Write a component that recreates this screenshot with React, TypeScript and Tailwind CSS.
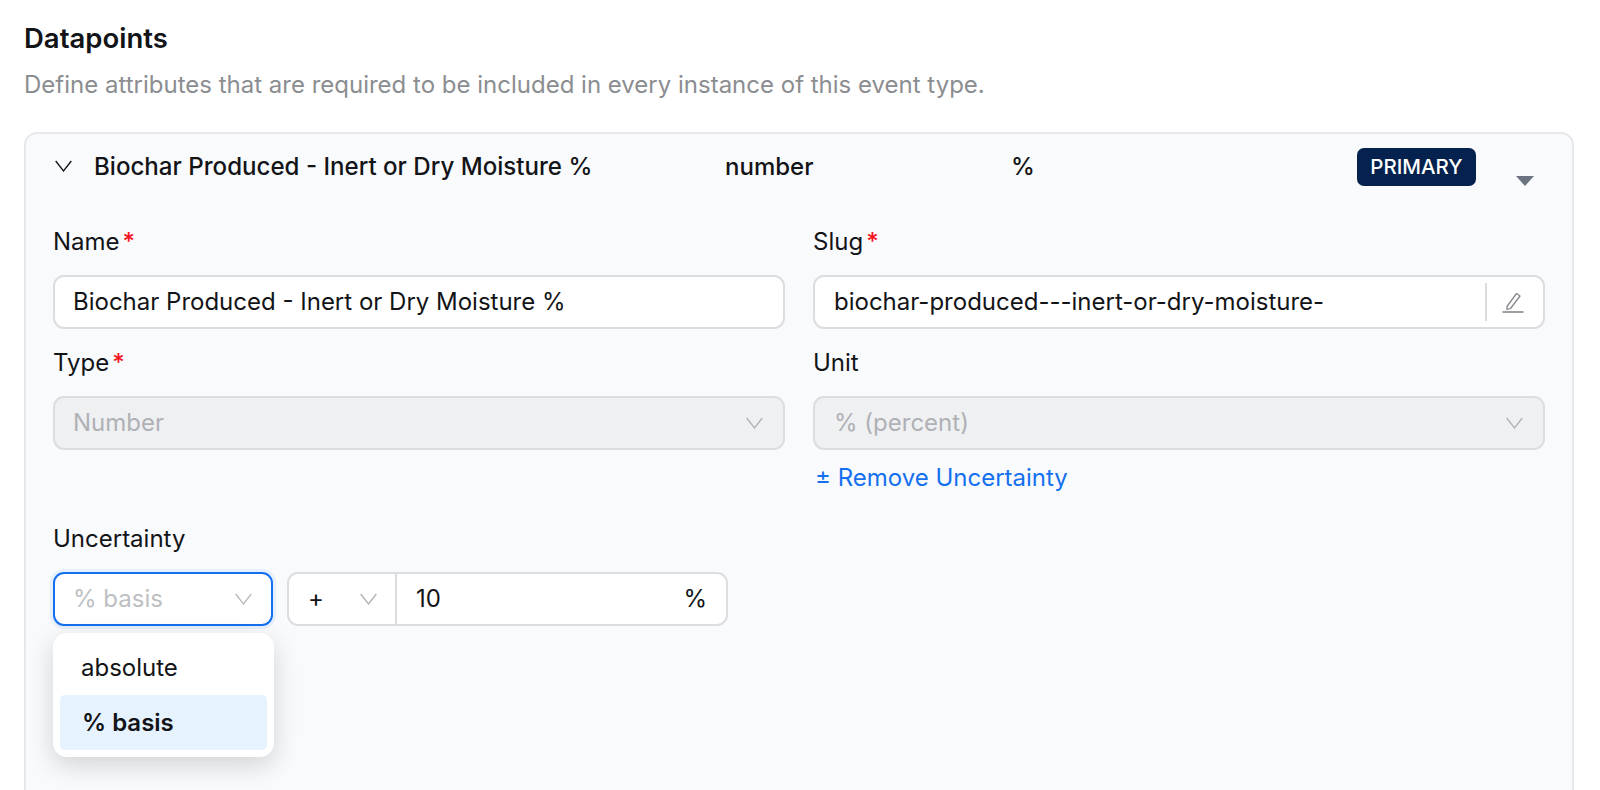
import type { ReactNode } from "react";

function Chevron({ className }: { className: string }) {
  return (
    <svg width="17" height="12" viewBox="0 0 17 12" fill="none" className={className}>
      <path d="M0.7 1l7.8 10L16.3 1" stroke="currentColor" strokeWidth="1.3" />
    </svg>
  );
}

function Label({ text, required }: { text: string; required?: boolean }) {
  return (
    <div className="mb-[17px] flex h-8 items-center text-[24px] text-[#131417]">
      {text}
      {required && <span className="ml-[3px] font-medium text-[#f5141e]">*</span>}
    </div>
  );
}

function Field({ label, required, children }: { label: string; required?: boolean; children: ReactNode }) {
  return (
    <div>
      <Label text={label} required={required} />
      {children}
    </div>
  );
}

function DisabledSelect({ value, inset }: { value: string; inset: string }) {
  return (
    <div className={`flex h-[54px] items-center justify-between rounded-[11px] border-2 border-[#dcdde0] bg-[#eff0f2] pr-[20px] text-[24px] text-[#afb1b5] ${inset}`}>
      {value}
      <Chevron className="text-[#b0b2b6]" />
    </div>
  );
}

export default function App() {
  return (
    <div className="h-[790px] overflow-hidden bg-white pl-6 pr-[26px] font-[Inter,sans-serif] text-[#131417]">
      <h2 className="flex h-[58px] items-end pb-[4px] text-[27.5px] leading-8 font-semibold">Datapoints</h2>
      <p className="flex h-[44px] items-center pt-[10px] text-[24px] text-[#8b8d91]">
        Define attributes that are required to be included in every instance of this event type.
      </p>
      <div className="mt-[30px] h-[700px] rounded-t-[13px] border-2 border-[#e7e8eb] bg-[#f9fafc] px-[27px] pt-[14px]">
        <div className="flex items-start">
          <div className="flex h-[36px] w-[41px] items-center">
            <Chevron className="ml-[2px] text-[#131417]" />
          </div>
          <div className="flex h-[38px] w-[631px] items-center text-[24.1px] font-medium">
            Biochar Produced - Inert or Dry Moisture %
          </div>
          <div className="flex h-[38px] w-[286px] items-center text-[24px] font-medium">number</div>
          <div className="flex h-[38px] w-[346px] items-center text-[24px] font-medium">%</div>
          <div className="flex h-[38px] w-[119px] items-center justify-center rounded-[7px] bg-[#05214d] text-[20.5px] font-medium text-white">
            PRIMARY
          </div>
          <div className="ml-[40px] mt-[28px] h-0 w-0 border-x-[9px] border-t-[10px] border-x-transparent border-t-[#6b7280]" />
        </div>

        <div className="mt-[40px] grid grid-cols-2 gap-x-[28px] gap-y-[18px]">
          <Field label="Name" required>
            <div className="flex h-[54px] items-center rounded-[11px] border-2 border-[#dcdde0] bg-white pl-[18px] text-[24px]">
              Biochar Produced - Inert or Dry Moisture %
            </div>
          </Field>
          <Field label="Slug" required>
            <div className="flex h-[54px] items-center rounded-[11px] border-2 border-[#dcdde0] bg-white pl-[19px] text-[24px]">
              <span className="flex-1">biochar-produced---inert-or-dry-moisture-</span>
              <div className="flex h-[38px] w-[58px] items-center justify-center border-l-2 border-[#dcdde0] pr-[5px]">
                <svg width="22" height="22" viewBox="0 0 22 22" fill="none" className="text-[#85878b]">
                  <path d="M5 15.5L14.5 2.5l3.5 2.5-9.5 12.5-3.5 1z" stroke="currentColor" strokeWidth="1.3" strokeLinejoin="round" />
                  <path d="M0.5 21h21" stroke="currentColor" strokeWidth="1.6" />
                </svg>
              </div>
            </div>
          </Field>
          <Field label="Type" required>
            <DisabledSelect value="Number" inset="pl-[18px]" />
          </Field>
          <Field label="Unit">
            <DisabledSelect value="% (percent)" inset="pl-[19px]" />
            <div className="mt-3 flex h-8 items-center pl-[2px] text-[24px] text-[#1570ef]">± Remove Uncertainty</div>
          </Field>
        </div>

        <div>
          <div className="mt-[29px] mb-[17px] flex h-8 items-center text-[24px]">Uncertainty</div>
          <div className="flex gap-[14px]">
            <div className="relative">
              <div className="flex h-[54px] w-[220px] items-center justify-between rounded-[11px] border-2 border-[#1570ef] bg-white pl-[18px] pr-[19px] text-[24px] text-[#bdbfc2] shadow-[0_0_0_3px_#e6f0fd]">
                % basis
                <Chevron className="text-[#b9bbbe]" />
              </div>
              <div className="absolute left-0 top-[61px] w-[221px] rounded-[14px] bg-white p-[7px] text-[24px] shadow-[0_8px_26px_rgba(0,0,0,0.16)]">
                <div className="flex h-[55px] items-center pl-[21px]">absolute</div>
                <div className="flex h-[55px] items-center rounded-[5px] bg-[#e6f3fe] pl-[22px] font-semibold">% basis</div>
              </div>
            </div>
            <div className="flex h-[54px] w-[441px] items-center rounded-[11px] border-2 border-[#dcdde0] bg-white text-[24px]">
              <div className="flex h-full w-[108px] items-center justify-between border-r-2 border-[#dcdde0] pl-[19px] pr-[18px]">
                +
                <Chevron className="text-[#b0b2b6]" />
              </div>
              <span className="flex-1 pl-[19px]">10</span>
              <span className="pr-[19px]">%</span>
            </div>
          </div>
        </div>
      </div>
    </div>
  );
}
